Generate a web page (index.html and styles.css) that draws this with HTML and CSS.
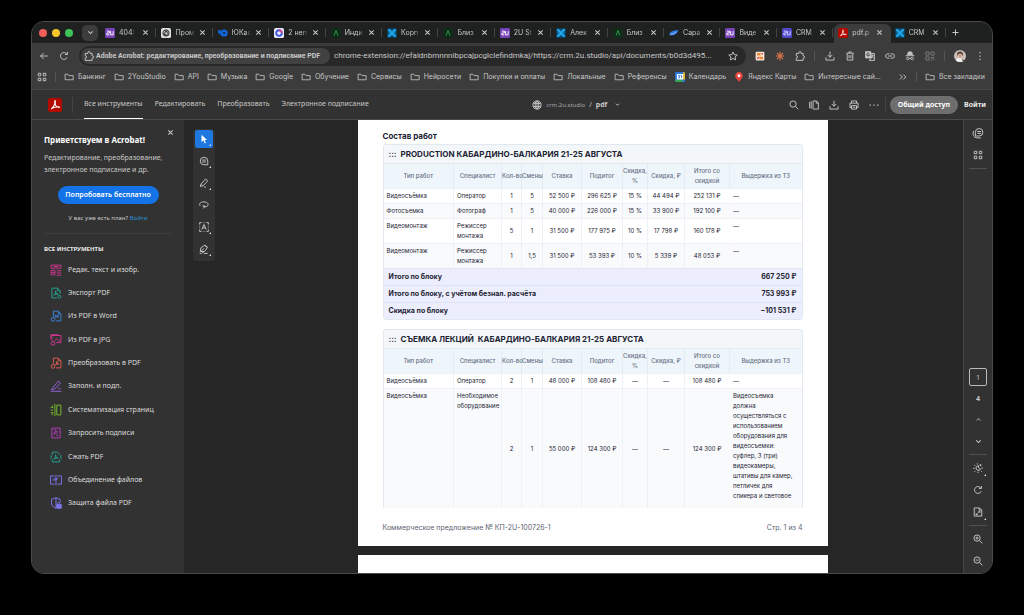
FILE: index.html
```html
<!DOCTYPE html>
<html lang="ru">
<head>
    <meta charset="UTF-8">
    <meta name="viewport" content="width=device-width, initial-scale=1.0">
    <title>pdf.pdf</title>
    <link rel="stylesheet" href="styles.css">
</head>
<body>
    <!-- icon sprite -->
    <svg class="sprite" aria-hidden="true">
        <symbol id="x" viewBox="0 0 16 16"><path d="M3 3l10 10M13 3L3 13"/></symbol>
        <symbol id="down" viewBox="0 0 16 16"><path d="M3 5.500l5 5 5-5"/></symbol>
        <symbol id="up" viewBox="0 0 16 16"><path d="M3 10.500l5-5 5 5"/></symbol>
        <symbol id="plus" viewBox="0 0 16 16"><path d="M8 1v14M1 8h14"/></symbol>
        <symbol id="back" viewBox="0 0 16 16"><path d="M14 8H2.500M7.500 3L2.500 8l5 5"/></symbol>
        <symbol id="reload" viewBox="0 0 16 16"><path d="M13 10A5.500 5.500 0 1 1 12.500 5M13.500 1.500V5.500H9.500"/></symbol>
        <symbol id="puzzle" viewBox="0 0 16 16"><path d="M2 4h4V3a2 2 0 0 1 4 0v1h3v4h.5a1.800 1.800 0 0 1 0 3.600H13V15H2v-3.500a2 2 0 0 0 0-4z"/></symbol>
        <symbol id="star" viewBox="0 0 16 16"><path d="M8 1.500l2 4.400 4.800.5-3.600 3.200 1 4.700L8 11.900l-4.200 2.400 1-4.700L1.200 6.400 6 5.900z"/></symbol>
        <symbol id="download" viewBox="0 0 16 16"><path d="M8 1v9M4.500 6.500L8 10l3.500-3.500M1.500 10v4.500h13V10"/></symbol>
        <symbol id="trash" viewBox="0 0 16 16"><path d="M2 3.500h12M6 3V1.500h4V3M3.500 4v10.500h9V4M6.500 6.500v5M9.500 6.500v5"/></symbol>
        <symbol id="translate" viewBox="0 0 16 16"><path d="M1 1h8l1 10H1z" fill="currentColor"/><path d="M9 4h6v11H7l3-4M10 7h4M12 6v1c0 2-1 3-2 4M11 8l3 4"/><path d="M7 4.500A2.300 2.300 0 1 0 7.200 6.500H5" stroke="#333"/></symbol>
        <symbol id="link" viewBox="0 0 16 16"><path d="M7 4.500H4.500a3.500 3.500 0 0 0 0 7H7M9 4.500h2.500a3.500 3.500 0 0 1 0 7H9M5 8h6"/></symbol>
        <symbol id="incognito" viewBox="0 0 16 16"><path d="M4 6l1.500-4.500h5L12 6z" fill="currentColor"/><path d="M1 7.500h14M6.500 12h3"/><circle cx="4.500" cy="12" r="2"/><circle cx="11.500" cy="12" r="2"/></symbol>
        <symbol id="qr" viewBox="0 0 16 16"><path d="M1.500 1.500h5v5h-5zM9.500 1.500h5v5h-5zM1.500 9.500h5v5h-5zM9 10h2v2h2v-2h2M9 15h2M13 14h2"/></symbol>
        <symbol id="apps" viewBox="0 0 16 16"><path d="M2 2h4v4H2zM10 2h4v4h-4zM2 10h4v4H2zM10 10h4v4h-4z"/></symbol>
        <symbol id="folder" viewBox="0 0 18 16"><path d="M2 3h5l2 2.500h7.500V13H2z"/></symbol>
        <symbol id="more" viewBox="0 0 16 16"><path d="M3 4l4 4-4 4M8.500 4l4 4-4 4"/></symbol>
        <symbol id="kebab" viewBox="0 0 16 16"><path d="M7 1.500h2v2H7zM7 7h2v2H7zM7 12.500h2v2H7z" fill="currentColor" stroke="none"/></symbol>
        <symbol id="dots" viewBox="0 0 16 16"><path d="M1 7h2v2H1zM7 7h2v2H7zM13 7h2v2h-2z" fill="currentColor" stroke="none"/></symbol>
        <symbol id="globe" viewBox="0 0 16 16"><circle cx="8" cy="8" r="6.500"/><ellipse cx="8" cy="8" rx="3" ry="6.500"/><path d="M8 1.500v13M2 5.500h12M2 10.500h12"/></symbol>
        <symbol id="search" viewBox="0 0 16 16"><circle cx="6.500" cy="6.500" r="5"/><path d="M10.200 10.200L15 15"/></symbol>
        <symbol id="pages" viewBox="0 0 16 16"><path d="M1 3v10M3.500 2v12M6.500 1.500H12L15 4.500v10H6.500zM11.500 1.500V5H15"/></symbol>
        <symbol id="print" viewBox="0 0 16 16"><path d="M4 5V1.500h8V5M4 12H1.500V5h13v7H12M4 9h8v5.500H4zM6 11.500h4"/></symbol>
        <symbol id="adobe" viewBox="0 0 16 16"><rect width="16" height="16" rx="3" fill="#b30b00"/><path d="M3.500 12.500C6 11 8 7 7.800 3.500c0-1.200 1-.5.6 1C7.500 8 9.500 10.500 12.500 10.800c1 .1.800-.8-.5-.8-3 0-6 .8-8 2" fill="none" stroke="#fff" stroke-width="1.200"/></symbol>
        <symbol id="cursor" viewBox="0 0 16 16"><path d="M4 1v12l3-3 2 5 2-1-2-4.500h4z" fill="currentColor" stroke="none"/></symbol>
        <symbol id="comment" viewBox="0 0 16 16"><path d="M14 14H8a6 6 0 1 1 6-6zM5 6.500h6M5 9.500h6"/></symbol>
        <symbol id="pen" viewBox="0 0 16 16"><path d="M3 10l7.500-8.500L14 4.500 6.500 12.500l-4.500 1zM4 10l2 2M8 14.500h3"/></symbol>
        <symbol id="lasso" viewBox="0 0 16 16"><path d="M2 9.500C-1 6 3 3 8 3s8 3 6 6c-1 1.500-4 2.500-7 1.500-2-1 0-2.500 1.500-1.500s0 3-1.500 4.500"/></symbol>
        <symbol id="textbox" viewBox="0 0 16 16"><path d="M1 4V1h3M12 1h3v3M15 12v3h-3M4 15H1v-3M6 1h1M9 1h1M6 15h1M9 15h1M1 6v1M1 9v1M15 6v1M15 9v1M4.500 12L8 4l3.500 8M6 9.500h4"/></symbol>
        <symbol id="sign" viewBox="0 0 16 16"><path d="M2 12l1-6 6-4 4 4-4 6zM3 12l5-5M9 2l5 3M1 15h3l2-2 2 2h6"/></symbol>
        <symbol id="chat" viewBox="0 0 16 16"><path d="M9.500 2A5 5 0 1 1 9.500 12H4.500V7a5 5 0 0 1 5-5zM2.500 5C0 9 2 14.500 7 14.500h5M7 6h5M7 8.500h5"/></symbol>
        <symbol id="bright" viewBox="0 0 16 16"><path d="M9 4.500a3.700 3.700 0 1 0 3 5c-2.500 0-4-2-3-5M7 .5v2M2 3l1.500 1.500M0 8.500h2.500M2.500 14L4 12.500M8 14v2M12 2v3M10.500 3.500h3M13.500 8H16M12.500 12.500L14 14"/></symbol>
        <symbol id="fit" viewBox="0 0 16 16"><path d="M2 1.500h8.500L14 5v9.500H2zM10 1.500V5h4M8.500 7H11v2.500M11 7L8.500 9M5 10v2.500h2.500M5 12.500l2.500-2"/></symbol>
        <symbol id="zoomin" viewBox="0 0 16 16"><circle cx="6.500" cy="6.500" r="5"/><path d="M10.200 10.200L15 15M4 6.500h5M6.500 4v5"/></symbol>
        <symbol id="zoomout" viewBox="0 0 16 16"><circle cx="6.500" cy="6.500" r="5"/><path d="M10.200 10.200L15 15M4 6.500h5"/></symbol>
        <symbol id="t-edit" viewBox="0 0 16 16"><path d="M1.500 1.500h13v4h-13zM1.500 8.500h5v6h-5zM9 9h6M9 12h6M9 15h6M1.500 11.500h5M5 3.500h6"/></symbol>
        <symbol id="t-export" viewBox="0 0 16 16"><path d="M9 14.500H2.500v-13H10L13.500 5v4M10 1.500V5h3.500M5 11c2-2 3-4 2.500-6 0 3 1.500 4.500 3.500 4.500-2-.5-4 0-6 1.500"/><circle cx="12.500" cy="13" r="2"/></symbol>
        <symbol id="t-word" viewBox="0 0 16 16"><path d="M4.500 9V1.500H11L14.500 5v9.500H8M11 1.500V5h3.500M6.500 6l1.200 4L9 7l1.300 3 1.200-4"/><circle cx="4" cy="12.500" r="2.500"/></symbol>
        <symbol id="t-convert" viewBox="0 0 16 16"><path d="M4.500 9V1.500H11L14.500 5v9.500H8M11 1.500V5h3.500M7 10.500c2-1.500 2.500-3.500 2-5 0 2.500 1 4 3 4-2-.5-3.500 0-5 1"/><circle cx="4" cy="12.500" r="2.500"/></symbol>
        <symbol id="t-jpg" viewBox="0 0 16 16"><path d="M2.500 9V2h12v9.500H8M1 6V1h10M6 9l3-3 5 5"/><circle cx="4" cy="12.500" r="2.500"/></symbol>
        <symbol id="t-sign" viewBox="0 0 16 16"><path d="M3 11L11 1.500l3 2.500L6 12l-4 1zM1 15h14M11 12l1.500-1.500L14 12"/></symbol>
        <symbol id="t-organize" viewBox="0 0 16 16"><path d="M9 1.500h5.500v13H9zM6.500 0v16M1 4.500h3.500M1 8h3M1 11.500h3.500M3 2v2M3 12v3"/></symbol>
        <symbol id="t-request" viewBox="0 0 16 16"><path d="M2.500 1.500h11v13h-11zM5 11c0-4 4-7 5-5s-3 3-4 2M8 11h3M5 4h3"/></symbol>
        <symbol id="t-compress" viewBox="0 0 16 16"><path d="M3 5.500v-4h7L13 5v1M13 11v3.500H3V11M0 6l2.500 2L0 10.500M16 6l-2.500 2 2.500 2.500M5 11c2-2 3-4 2.500-6 0 3 1.500 4.500 3.500 4.500-2-.5-4 0-6 1.500"/></symbol>
        <symbol id="t-merge" viewBox="0 0 16 16"><path d="M6 2.500H.8v11H6M10 2.500h5.200v11H10M8 1v14M5 5l3 3 3-3M3 8h4"/></symbol>
        <symbol id="t-protect" viewBox="0 0 16 16"><path d="M8 1L2 3v5c0 4 3 6 6 7V1l5.500 2v4M10 10V8.500a1.500 1.500 0 0 1 3 0V10"/><path d="M9 10h6v5H9z" fill="currentColor"/></symbol>
        <symbol id="f-2u" viewBox="0 0 16 16"><rect width="16" height="16" rx="2" fill="#7543b5"/><path d="M3 5h4v3H3v3h4M9 5v6h4V5" fill="none" stroke="#fff" stroke-width="1.500"/></symbol>
        <symbol id="f-crm" viewBox="0 0 16 16"><rect width="16" height="16" rx="3" fill="#5149c9"/><path d="M3 5h4v3H3v3h4M9 5v6h4V5" fill="none" stroke="#d5d4ff" stroke-width="1.500"/></symbol>
        <symbol id="f-gpt" viewBox="0 0 16 16"><rect width="16" height="16" rx="3" fill="#dedede"/><circle cx="8" cy="8" r="5" fill="none" stroke="#333"/><path d="M5 4l6 3v5M11 4L5 8v4M3 9l6 3M8 3v4M8 9v4" fill="none" stroke="#333"/></symbol>
        <symbol id="f-yoo" viewBox="0 0 18 16"><circle cx="11" cy="8" r="6.500" fill="#1266dd"/><circle cx="11" cy="8" r="2" fill="#1f2020"/><path d="M0 3h5v9L0 7z" fill="#1266dd"/></symbol>
        <symbol id="f-ring" viewBox="0 0 16 16"><rect width="16" height="16" rx="3" fill="#eeeafb"/><circle cx="8" cy="8" r="4.500" fill="none" stroke="#3556dc" stroke-width="3"/><path d="M8 3.500a4.500 4.500 0 0 1 4.500 4.500" fill="none" stroke="#dc4b96" stroke-width="3"/></symbol>
        <symbol id="f-a" viewBox="0 0 16 16"><rect width="16" height="16" rx="3" fill="#102b18"/><path d="M5 12l3-8 3 8" fill="none" stroke="#2e9e51" stroke-width="1.500"/></symbol>
        <symbol id="f-x" viewBox="0 0 16 16"><rect width="16" height="16" rx="3" fill="#073955"/><path d="M2 2l12 12M14 2L2 14" fill="none" stroke="#20a8ed" stroke-width="3.500"/><path d="M6 2l2 2 2-2M6 14l2-2 2 2M2 6l2 2-2 2M14 6l-2 2 2 2" fill="none" stroke="#20a8ed" stroke-width="1.200"/></symbol>
        <symbol id="f-bird" viewBox="0 0 18 16"><path d="M1 10c1-4 5-7 16-7-2 6-7 9-11 9H0z" fill="#337be2"/><path d="M2 10c4 1 8-1 11-4" fill="none" stroke="#9cc4ff" stroke-width="1.500"/></symbol>
        <symbol id="f-orange" viewBox="0 0 16 16"><rect x="1" y="1" width="14" height="14" rx="2" fill="#f6e6d8"/><path d="M3 3h6v4H3zM7 9h6v4H7z" fill="#ec8a35"/><path d="M10.500 3.500l2 2M3.500 12.500l3-3" stroke="#d8433a" stroke-width="2"/></symbol>
        <symbol id="f-claude" viewBox="0 0 16 16"><path d="M8 1v14M1 8h14M3 3l10 10M13 3L3 13" fill="none" stroke="#d9734c" stroke-width="1.800"/></symbol>
        <symbol id="f-cal" viewBox="0 0 16 16"><rect width="16" height="16" rx="2" fill="#2874df"/><path d="M13 0h1.500L16 2v10h-3z" fill="#f0bd24"/><path d="M0 12h12v4H2L0 14z" fill="#35a654"/><path d="M3 3h10v9H3z" fill="#fff"/><path d="M5 5.500h2v4H5M9 5.500h1.500v4" fill="none" stroke="#2874df"/></symbol>
        <symbol id="f-pin" viewBox="0 0 16 16"><path d="M8 16L4.500 11a6 6 0 1 1 7 0z" fill="#e8453c"/><circle cx="8" cy="6" r="2.300" fill="#fff"/></symbol>
        <symbol id="f-face" viewBox="0 0 16 16"><circle cx="8" cy="8" r="8" fill="#cdbfb7"/><path d="M4 5c1-4 8-4 8 1l-1 2-1-3H6L5 8z" fill="#493a35"/><path d="M6 5h4v4l-2 2-2-2z" fill="#d69b83"/><path d="M2.500 14C4 10 6 10 8 11c3-1 5 1 5.500 3a8 8 0 0 1-11 0" fill="#eee"/><path d="M10 11l2 5 2-2z" fill="#6b5049"/></symbol>
    </svg>

    <div class="window">
        <div class="tabstrip">
            <div class="lights"><i class="red"></i><i class="yellow"></i><i class="green"></i></div>
            <button class="tab-search" aria-label="Поиск вкладок"><svg class="ico xs"><use href="#down"/></svg></button>
            <div class="tabs">
                <div class="tab"><svg class="ico fav"><use href="#f-2u"/></svg><a href="#">404:</a><button aria-label="Закрыть"><svg class="ico xs"><use href="#x"/></svg></button></div>
                <div class="tab"><svg class="ico fav"><use href="#f-gpt"/></svg><a href="#">Пром</a><button aria-label="Закрыть"><svg class="ico xs"><use href="#x"/></svg></button></div>
                <div class="tab"><svg class="ico fav"><use href="#f-yoo"/></svg><a href="#">ЮКас</a><button aria-label="Закрыть"><svg class="ico xs"><use href="#x"/></svg></button></div>
                <div class="tab"><svg class="ico fav"><use href="#f-ring"/></svg><a href="#">2 неп</a><button aria-label="Закрыть"><svg class="ico xs"><use href="#x"/></svg></button></div>
                <div class="tab"><svg class="ico fav"><use href="#f-a"/></svg><a href="#">Инди</a><button aria-label="Закрыть"><svg class="ico xs"><use href="#x"/></svg></button></div>
                <div class="tab"><svg class="ico fav"><use href="#f-x"/></svg><a href="#">Корп</a><button aria-label="Закрыть"><svg class="ico xs"><use href="#x"/></svg></button></div>
                <div class="tab"><svg class="ico fav"><use href="#f-a"/></svg><a href="#">Близ</a><button aria-label="Закрыть"><svg class="ico xs"><use href="#x"/></svg></button></div>
                <div class="tab"><svg class="ico fav"><use href="#f-2u"/></svg><a href="#">2U St</a><button aria-label="Закрыть"><svg class="ico xs"><use href="#x"/></svg></button></div>
                <div class="tab"><svg class="ico fav"><use href="#f-x"/></svg><a href="#">Алек</a><button aria-label="Закрыть"><svg class="ico xs"><use href="#x"/></svg></button></div>
                <div class="tab"><svg class="ico fav"><use href="#f-a"/></svg><a href="#">Близ</a><button aria-label="Закрыть"><svg class="ico xs"><use href="#x"/></svg></button></div>
                <div class="tab"><svg class="ico fav"><use href="#f-bird"/></svg><a href="#">Сара</a><button aria-label="Закрыть"><svg class="ico xs"><use href="#x"/></svg></button></div>
                <div class="tab"><svg class="ico fav"><use href="#f-2u"/></svg><a href="#">Виде</a><button aria-label="Закрыть"><svg class="ico xs"><use href="#x"/></svg></button></div>
                <div class="tab"><svg class="ico fav"><use href="#f-crm"/></svg><a href="#">CRM</a><button aria-label="Закрыть"><svg class="ico xs"><use href="#x"/></svg></button></div>
                <div class="tab active"><svg class="ico fav"><use href="#adobe"/></svg><a href="#">pdf.p</a><button aria-label="Закрыть"><svg class="ico xs"><use href="#x"/></svg></button></div>
                <div class="tab"><svg class="ico fav"><use href="#f-x"/></svg><a href="#">CRM</a><button aria-label="Закрыть"><svg class="ico xs"><use href="#x"/></svg></button></div>
            </div>
            <button class="new-tab" aria-label="Новая вкладка"><svg class="ico xs"><use href="#plus"/></svg></button>
        </div>

        <div class="toolbar">
            <button class="tool" aria-label="Назад"><svg class="ico"><use href="#back"/></svg></button>
            <button class="tool" aria-label="Обновить"><svg class="ico"><use href="#reload"/></svg></button>
            <div class="omnibox">
                <span class="chip"><svg class="ico"><use href="#puzzle"/></svg>Adobe Acrobat: редактирование, преобразование и подписание PDF</span>
                <input type="text" aria-label="Адрес" value="chrome-extension://efaidnbmnnnibpcajpcglclefindmkaj/https://crm.2u.studio/api/documents/b0d3d495...">
                <button aria-label="В закладки"><svg class="ico"><use href="#star"/></svg></button>
            </div>
            <div class="extensions">
                <button class="tool" aria-label="Расширение"><svg class="ico fav"><use href="#f-orange"/></svg></button>
                <button class="tool" aria-label="Claude"><svg class="ico fav"><use href="#f-claude"/></svg></button>
                <button class="tool" aria-label="Расширения"><svg class="ico"><use href="#puzzle"/></svg></button>
                <span class="sep"></span>
                <button class="tool" aria-label="Загрузки"><svg class="ico"><use href="#download"/></svg></button>
                <button class="tool" aria-label="Удалить данные"><svg class="ico"><use href="#trash"/></svg></button>
                <button class="tool" aria-label="Перевести"><svg class="ico"><use href="#translate"/></svg></button>
                <button class="tool" aria-label="Копировать ссылку"><svg class="ico"><use href="#link"/></svg></button>
                <button class="tool" aria-label="Инкогнито"><svg class="ico"><use href="#incognito"/></svg></button>
                <button class="tool dim" aria-label="QR-код"><svg class="ico"><use href="#qr"/></svg></button>
                <span class="sep"></span>
                <button class="tool" aria-label="Профиль"><svg class="ico lg fav"><use href="#f-face"/></svg></button>
                <button class="tool" aria-label="Меню"><svg class="ico"><use href="#kebab"/></svg></button>
            </div>
        </div>

        <nav class="bookmarks">
            <a href="#" aria-label="Приложения"><svg class="ico"><use href="#apps"/></svg></a>
            <span class="sep"></span>
            <a href="#"><svg class="ico"><use href="#folder"/></svg>Банкинг</a>
            <a href="#"><svg class="ico"><use href="#folder"/></svg>2YouStudio</a>
            <a href="#"><svg class="ico"><use href="#folder"/></svg>API</a>
            <a href="#"><svg class="ico"><use href="#folder"/></svg>Музыка</a>
            <a href="#"><svg class="ico"><use href="#folder"/></svg>Google</a>
            <a href="#"><svg class="ico"><use href="#folder"/></svg>Обучение</a>
            <a href="#"><svg class="ico"><use href="#folder"/></svg>Сервисы</a>
            <a href="#"><svg class="ico"><use href="#folder"/></svg>Нейросети</a>
            <a href="#"><svg class="ico"><use href="#folder"/></svg>Покупки и оплаты</a>
            <a href="#"><svg class="ico"><use href="#folder"/></svg>Локальные</a>
            <a href="#"><svg class="ico"><use href="#folder"/></svg>Референсы</a>
            <a href="#"><svg class="ico fav"><use href="#f-cal"/></svg>Календарь</a>
            <a href="#"><svg class="ico fav"><use href="#f-pin"/></svg>Яндекс Карты</a>
            <a href="#"><svg class="ico"><use href="#folder"/></svg>Интересные сай...</a>
            <a href="#" class="overflow" aria-label="Ещё"><svg class="ico"><use href="#more"/></svg></a>
            <span class="sep"></span>
            <a href="#"><svg class="ico"><use href="#folder"/></svg>Все закладки</a>
        </nav>

        <header class="acrobat-bar">
            <svg class="logo"><use href="#adobe"/></svg>
            <span class="sep"></span>
            <nav class="menu">
                <a href="#" class="current">Все инструменты</a>
                <a href="#">Редактировать</a>
                <a href="#">Преобразовать</a>
                <a href="#">Электронное подписание</a>
            </nav>
            <div class="doc-name">
                <svg class="ico"><use href="#globe"/></svg>
                <span class="host">crm.2u.studio</span><span>/</span><b>pdf</b>
                <svg class="ico xxs"><use href="#down"/></svg>
            </div>
            <div class="actions">
                <button class="tool" aria-label="Поиск"><svg class="ico"><use href="#search"/></svg></button>
                <button class="tool" aria-label="Страницы"><svg class="ico"><use href="#pages"/></svg></button>
                <button class="tool" aria-label="Скачать"><svg class="ico"><use href="#download"/></svg></button>
                <button class="tool" aria-label="Печать"><svg class="ico"><use href="#print"/></svg></button>
                <button class="tool" aria-label="Ещё"><svg class="ico"><use href="#dots"/></svg></button>
                <span class="sep"></span>
                <button class="share">Общий доступ</button>
                <button class="login">Войти</button>
            </div>
        </header>

        <div class="workspace">
            <aside class="sidebar">
                <button class="close" aria-label="Закрыть"><svg class="ico xs"><use href="#x"/></svg></button>
                <h2>Приветствуем в Acrobat!</h2>
                <p>Редактирование, преобразование, электронное подписание и др.</p>
                <button class="try">Попробовать бесплатно</button>
                <p class="plan">У вас уже есть план? <a href="#">Войти</a></p>
                <h3>ВСЕ ИНСТРУМЕНТЫ</h3>
                <ul>
                    <li><a href="#"><svg class="ico lg pink"><use href="#t-edit"/></svg>Редак. текст и изобр.</a></li>
                    <li><a href="#"><svg class="ico lg teal"><use href="#t-export"/></svg>Экспорт PDF</a></li>
                    <li><a href="#"><svg class="ico lg blue"><use href="#t-word"/></svg>Из PDF в Word</a></li>
                    <li><a href="#"><svg class="ico lg pink"><use href="#t-jpg"/></svg>Из PDF в JPG</a></li>
                    <li><a href="#"><svg class="ico lg coral"><use href="#t-convert"/></svg>Преобразовать в PDF</a></li>
                    <li><a href="#"><svg class="ico lg violet"><use href="#t-sign"/></svg>Заполн. и подп.</a></li>
                    <li><a href="#"><svg class="ico lg lime"><use href="#t-organize"/></svg>Систематизация страниц</a></li>
                    <li><a href="#"><svg class="ico lg magenta"><use href="#t-request"/></svg>Запросить подписи</a></li>
                    <li><a href="#"><svg class="ico lg teal"><use href="#t-compress"/></svg>Сжать PDF</a></li>
                    <li><a href="#"><svg class="ico lg indigo"><use href="#t-merge"/></svg>Объединение файлов</a></li>
                    <li><a href="#"><svg class="ico lg indigo"><use href="#t-protect"/></svg>Защита файла PDF</a></li>
                </ul>
            </aside>

            <div class="quick">
                <div class="quick-tools">
                    <button class="selected" aria-label="Выделение"><svg class="ico"><use href="#cursor"/></svg></button>
                    <button aria-label="Комментарий"><svg class="ico"><use href="#comment"/></svg></button>
                    <button aria-label="Карандаш"><svg class="ico"><use href="#pen"/></svg></button>
                    <button class="plain" aria-label="Лассо"><svg class="ico"><use href="#lasso"/></svg></button>
                    <button aria-label="Текст"><svg class="ico"><use href="#textbox"/></svg></button>
                    <button aria-label="Подпись"><svg class="ico"><use href="#sign"/></svg></button>
                </div>
            </div>

            <main class="viewer">
                <section class="page">
                    <h1>Состав работ</h1>

                    <div class="block">
                        <h2><span class="grip">:::</span>PRODUCTION КАБАРДИНО-БАЛКАРИЯ 21-25 АВГУСТА</h2>
                        <table>
                            <colgroup><col class="c-type"><col class="c-spec"><col class="c-qty"><col class="c-shift"><col class="c-rate"><col class="c-sub"><col class="c-pct"><col class="c-disc"><col class="c-total"><col></colgroup>
                            <thead>
                                <tr><th>Тип работ</th><th>Специалист</th><th class="tight">Кол-во</th><th>Смены</th><th>Ставка</th><th>Подитог</th><th>Скидка, %</th><th>Скидка, ₽</th><th>Итого со скидкой</th><th>Выдержка из ТЗ</th></tr>
                            </thead>
                            <tbody>
                                <tr><td>Видеосъёмка</td><td>Оператор</td><td>1</td><td>5</td><td>52 500 ₽</td><td>296 625 ₽</td><td>15 %</td><td>44 494 ₽</td><td>252 131 ₽</td><td>—</td></tr>
                                <tr><td>Фотосъемка</td><td>Фотограф</td><td>1</td><td>5</td><td>40 000 ₽</td><td>226 000 ₽</td><td>15 %</td><td>33 900 ₽</td><td>192 100 ₽</td><td>—</td></tr>
                                <tr><td>Видеомонтаж</td><td>Режиссер монтажа</td><td>5</td><td>1</td><td>31 500 ₽</td><td>177 975 ₽</td><td>10 %</td><td>17 798 ₽</td><td>160 178 ₽</td><td>—</td></tr>
                                <tr><td>Видеомонтаж</td><td>Режиссер монтажа</td><td>1</td><td>1,5</td><td>31 500 ₽</td><td>53 393 ₽</td><td>10 %</td><td>5 339 ₽</td><td>48 053 ₽</td><td>—</td></tr>
                            </tbody>
                            <tfoot>
                                <tr><td colspan="7">Итого по блоку</td><td colspan="3">667 250 ₽</td></tr>
                                <tr><td colspan="7">Итого по блоку, с учётом безнал. расчёта</td><td colspan="3">753 993 ₽</td></tr>
                                <tr><td colspan="7">Скидка по блоку</td><td colspan="3">−101 531 ₽</td></tr>
                            </tfoot>
                        </table>
                    </div>

                    <div class="block cut">
                        <h2><span class="grip">:::</span>СЪЕМКА ЛЕКЦИЙ &nbsp;КАБАРДИНО-БАЛКАРИЯ 21-25 АВГУСТА</h2>
                        <table>
                            <colgroup><col class="c-type"><col class="c-spec"><col class="c-qty"><col class="c-shift"><col class="c-rate"><col class="c-sub"><col class="c-pct"><col class="c-disc"><col class="c-total"><col></colgroup>
                            <thead>
                                <tr><th>Тип работ</th><th>Специалист</th><th class="tight">Кол-во</th><th>Смены</th><th>Ставка</th><th>Подитог</th><th>Скидка, %</th><th>Скидка, ₽</th><th>Итого со скидкой</th><th>Выдержка из ТЗ</th></tr>
                            </thead>
                            <tbody>
                                <tr><td>Видеосъёмка</td><td>Оператор</td><td>2</td><td>1</td><td>48 000 ₽</td><td>108 480 ₽</td><td>—</td><td>—</td><td>108 480 ₽</td><td>—</td></tr>
                                <tr><td>Видеосъёмка</td><td>Необходимое оборудование</td><td>2</td><td>1</td><td>55 000 ₽</td><td>124 300 ₽</td><td>—</td><td>—</td><td>124 300 ₽</td><td class="note">Видеосъемка должна осуществляться с использованием оборудования для видеосъемки: суфлер, 3 (три) видеокамеры, штативы для камер, петличек для спикера и световое</td></tr>
                            </tbody>
                        </table>
                    </div>

                    <footer><span>Коммерческое предложение № КП-2U-100726-1</span><span>Стр. 1 из 4</span></footer>
                </section>
                <section class="page"></section>
            </main>

            <aside class="rail">
                <button class="tool" aria-label="Комментарии"><svg class="ico lg"><use href="#chat"/></svg></button>
                <button class="tool" aria-label="Миниатюры"><svg class="ico"><use href="#apps"/></svg></button>
                <hr>
                <div class="rail-bottom">
                    <input type="text" aria-label="Страница" value="1">
                    <span>4</span>
                    <button class="tool dim" aria-label="Предыдущая"><svg class="ico xs"><use href="#up"/></svg></button>
                    <button class="tool" aria-label="Следующая"><svg class="ico xs"><use href="#down"/></svg></button>
                    <hr>
                    <button class="tool corner" aria-label="Тема"><svg class="ico"><use href="#bright"/></svg></button>
                    <button class="tool" aria-label="Повернуть"><svg class="ico"><use href="#reload"/></svg></button>
                    <button class="tool corner" aria-label="По размеру"><svg class="ico"><use href="#fit"/></svg></button>
                    <hr>
                    <button class="tool" aria-label="Увеличить"><svg class="ico"><use href="#zoomin"/></svg></button>
                    <button class="tool" aria-label="Уменьшить"><svg class="ico"><use href="#zoomout"/></svg></button>
                </div>
            </aside>
        </div>
    </div>
</body>
</html>
```
FILE: styles.css
```css
* {
    box-sizing: border-box;
}
body {
    margin: 0;
    height: 100vh;
    padding: 21px 31px 41px;
    background: #000;
    color: #c8c8c8;
    font: 7px/10px Inter, sans-serif;
}
button, input {
    margin: 0;
    padding: 0;
    border: 0;
    background: none;
    color: inherit;
    font: inherit;
}
a {
    color: inherit;
    text-decoration: none;
}
h1, h2, h3, p, ul {
    margin: 0;
    padding: 0;
}
.sprite {
    display: none;
}
.ico {
    flex: none;
    display: block;
    width: 10px;
    height: 10px;
    fill: none;
    stroke: currentColor;
    stroke-width: 1.5;
}
.ico.lg {
    width: 12px;
    height: 12px;
    stroke-width: 1.3;
}
.ico.xs {
    width: 7px;
    height: 7px;
    stroke-width: 2.3;
}
.ico.xxs {
    width: 5px;
    height: 5px;
    stroke-width: 3;
}
.ico.fav {
    stroke: none;
}
.sep {
    flex: none;
    width: 1px;
    height: 10px;
    background: #555;
}
.window {
    height: 100%;
    display: flex;
    flex-direction: column;
    border: 1px solid #4a4a4a;
    border-radius: 13px;
    overflow: hidden;
    background: #262626;
}

/* browser */
.tabstrip {
    flex: none;
    height: 21px;
    display: flex;
    align-items: center;
    padding: 0 33px 0 7px;
    background: #1f2020;
}
.lights {
    display: flex;
    gap: 5px;
}
.lights i {
    width: 8px;
    height: 8px;
    border-radius: 50%;
}
.red { background: #f25f5a; }
.yellow { background: #f5c52b; }
.green { background: #3cc456; }
.tab-search {
    width: 16px;
    height: 16px;
    margin: 0 3px 0 9px;
    border-radius: 5px;
    background: #3c3c3c;
    display: grid;
    place-items: center;
}
.tabs {
    flex: 1;
    min-width: 0;
    height: 100%;
    display: flex;
}
.tab {
    flex: 1;
    min-width: 0;
    display: flex;
    align-items: center;
    gap: 4px;
    margin-top: 2px;
    padding: 0 8px 2px 4px;
    border-radius: 6px 6px 0 0;
    position: relative;
}
.tab::after {
    content: "";
    position: absolute;
    right: 1px;
    width: 1px;
    height: 9px;
    background: #444;
}
.tab.active {
    background: #3c3c3c;
}
.tab.active::after {
    display: none;
}
.tab a {
    flex: 1;
    min-width: 0;
    overflow: hidden;
    white-space: nowrap;
    mask-image: linear-gradient(90deg, #000 70%, transparent);
}
.new-tab {
    padding-left: 5px;
}
.toolbar {
    flex: none;
    height: 26px;
    display: flex;
    align-items: center;
    padding: 0 2px;
    background: #3c3c3c;
}
.tool {
    flex: none;
    width: 20px;
    height: 20px;
    display: grid;
    place-items: center;
    position: relative;
}
.dim {
    color: #7b7b7b;
}
.omnibox {
    flex: 1;
    min-width: 0;
    height: 20px;
    display: flex;
    align-items: center;
    gap: 4px;
    margin: 0 4px 0 5px;
    padding: 0 8px 0 2px;
    border-radius: 10px;
    background: #282828;
}
.chip {
    flex: none;
    height: 16px;
    display: flex;
    align-items: center;
    gap: 2px;
    padding: 0 10px 0 3px;
    border-radius: 8px;
    background: #414141;
    font: 700 7px/10px Roboto, sans-serif;
}
.omnibox input {
    flex: 1;
    min-width: 0;
    font: 8px/12px Roboto, sans-serif;
}
.extensions {
    display: flex;
    align-items: center;
}
.extensions .sep {
    margin: 0 5px 0 4px;
}
.bookmarks {
    flex: none;
    height: 20px;
    display: flex;
    align-items: center;
    gap: 8px;
    padding: 0 7px 5px 5px;
    background: #3c3c3c;
    white-space: nowrap;
}
.bookmarks a {
    display: flex;
    align-items: center;
    gap: 4px;
}
.bookmarks .overflow {
    margin-left: auto;
}

/* acrobat */
.acrobat-bar, .sidebar, .rail {
    font-family: "Noto Sans", sans-serif;
    background: #323232;
}
.acrobat-bar {
    flex: none;
    height: 31px;
    display: flex;
    align-items: center;
    padding: 0 6px 0 16px;
    border-top: 1px solid #454545;
    border-bottom: 1px solid #4a4a4a;
    font-size: 7px;
}
.logo {
    width: 14px;
    height: 14px;
}
.acrobat-bar .sep {
    height: 16px;
    margin: 0 11px 0 10px;
    background: #444;
}
.menu {
    align-self: stretch;
    display: flex;
    gap: 12px;
}
.menu a {
    display: flex;
    align-items: center;
    border-bottom: 1px solid transparent;
}
.menu .current {
    border-color: #fff;
}
.doc-name {
    margin: 0 auto;
    display: flex;
    align-items: center;
    gap: 4px;
}
.host {
    color: #a5a5a5;
    font-size: 6px;
}
.doc-name .xxs {
    margin-left: 4px;
}
.actions {
    display: flex;
    align-items: center;
}
.actions .sep {
    margin: 0 4px 0 1px;
}
.share {
    height: 18px;
    padding: 0 8px;
    border-radius: 9px;
    background: #6e6e6e;
    color: #fff;
    font-weight: 700;
}
.login {
    margin-left: 6px;
    color: #eee;
    font-weight: 700;
}
.workspace {
    flex: 1;
    min-height: 0;
    display: flex;
}
.sidebar {
    flex: none;
    width: 152px;
    padding: 13px 12px;
    position: relative;
    font-size: 7px;
    line-height: 12px;
}
.sidebar .close {
    position: absolute;
    top: 9px;
    right: 10px;
}
.sidebar h2 {
    margin-bottom: 5px;
    color: #fff;
    font-size: 8px;
    line-height: 14px;
}
.try {
    display: block;
    width: 101px;
    height: 18px;
    margin: 10px auto 8px;
    border-radius: 9px;
    background: #1473e6;
    color: #fff;
    font-weight: 600;
}
.plan {
    padding-bottom: 9px;
    border-bottom: 1px solid #3e3e3e;
    text-align: center;
    font-size: 6px;
}
.plan a {
    color: #2d8fd5;
}
.sidebar h3 {
    margin: 9px 0 3px;
    color: #e8e8e8;
    font-size: 6px;
}
.sidebar ul {
    height: 257px;
    display: grid;
    grid-auto-rows: 1fr;
    list-style: none;
}
.sidebar li a {
    height: 100%;
    display: flex;
    align-items: center;
    gap: 6px;
    padding-left: 6px;
    color: #dcdcdc;
}
.sidebar .pink { color: #d0388f; }
.sidebar .teal { color: #24a18f; }
.sidebar .blue { color: #3a83d8; }
.sidebar .coral { color: #db5d50; }
.sidebar .violet { color: #9664dc; }
.sidebar .lime { color: #78b82a; }
.sidebar .magenta { color: #b83cc0; }
.sidebar .indigo { color: #7b75e8; }
.quick {
    flex: none;
    width: 38px;
    padding: 9px;
}
.quick-tools {
    width: 22px;
    padding: 1px 2px 3px;
    border-radius: 3px;
    background: #323232;
    display: grid;
    gap: 4px;
}
.quick-tools button {
    width: 18px;
    height: 18px;
    display: grid;
    place-items: center;
    border-radius: 2px;
    position: relative;
}
.quick-tools .selected {
    background: #1f77e0;
    color: #fff;
}
.quick-tools button:not(.plain)::after, .corner::after {
    content: "";
    position: absolute;
    right: 2px;
    bottom: 2px;
    border: 1px solid #ddd;
    border-top-color: transparent;
    border-left-color: transparent;
}
.viewer {
    flex: 1;
    min-width: 0;
    display: flex;
    flex-direction: column;
    align-items: center;
    gap: 9px;
    overflow: hidden;
}
.page {
    flex: none;
    width: 100%;
    max-width: 470px;
    min-height: 426px;
    padding: 10px 25px;
    background: #fff;
    color: #1e2433;
}
.page h1 {
    margin-bottom: 2px;
    font-size: 8px;
    line-height: 12px;
    font-weight: 700;
}
.block {
    margin-bottom: 9px;
    border: 1px solid #e2e8ef;
    border-radius: 3px;
    overflow: hidden;
}
.block h2 {
    padding: 3px 5px;
    background: #f3f7fa;
    font-size: 8px;
    line-height: 12px;
    font-weight: 700;
}
.grip {
    margin-right: 4px;
}
table {
    width: 100%;
    table-layout: fixed;
    border-collapse: collapse;
    font-size: 6px;
    line-height: 10px;
}
.c-type { width: 70px; }
.c-spec { width: 48px; }
.c-qty { width: 20px; }
.c-shift { width: 21px; }
.c-rate { width: 39px; }
.c-sub { width: 41px; }
.c-pct { width: 25px; }
.c-disc { width: 37px; }
.c-total { width: 45px; }
th, td {
    padding: 2px 3px;
    border: 1px solid #edf1f5;
    border-width: 1px 0 0 1px;
    text-align: center;
}
th:first-child, td:first-child {
    border-left: 0;
}
th {
    padding: 2px 0;
    background: #eff6fb;
    border-color: #e4ebf2;
    color: #667085;
    font-weight: 500;
}
.tight {
    white-space: nowrap;
}
tbody td:nth-child(n+3) {
    padding: 2px 0;
    white-space: nowrap;
}
tbody td:first-child, tbody td:nth-child(2), tbody td:last-child {
    padding: 2px 3px;
    text-align: left;
    vertical-align: top;
}
tbody td:last-child {
    border-left-color: transparent;
}
tbody tr:nth-child(even) {
    background: #f8fafc;
}
tbody .note:last-child {
    padding: 2px 5px 7px 3px;
    white-space: normal;
}
tfoot td {
    padding: 3px 5px;
    border-color: #dfe3f6;
    border-left: 0;
    background: #eceefd;
    text-align: left;
    font-size: 7px;
    font-weight: 700;
}
tfoot td:last-child {
    text-align: right;
}
.cut {
    border-bottom: 0;
    border-radius: 3px 3px 0 0;
}
.page footer {
    display: flex;
    justify-content: space-between;
    margin-top: 15px;
    color: #5c6270;
}
.rail {
    flex: none;
    width: 29px;
    display: flex;
    flex-direction: column;
    align-items: center;
    gap: 2px;
    padding: 3px 0 2px;
    border-left: 1px solid #444;
}
.rail hr {
    width: 18px;
    margin: 1px 0;
    border: 0;
    border-top: 1px solid #505050;
}
.rail-bottom {
    margin-top: auto;
    display: flex;
    flex-direction: column;
    align-items: center;
    gap: 2px;
}
.rail input {
    width: 18px;
    height: 18px;
    margin-bottom: 6px;
    border: 1px solid #bbb;
    border-radius: 2px;
    text-align: center;
}
.rail span {
    margin-bottom: 3px;
    font-weight: 700;
}
```
